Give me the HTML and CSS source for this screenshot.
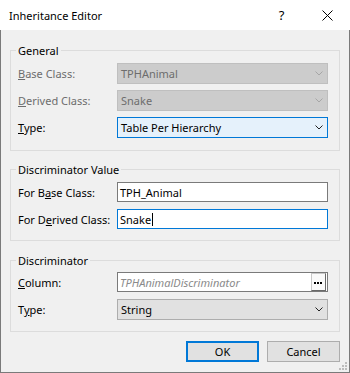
FILE: index.html
```html
<!DOCTYPE html>
<html lang="en">

<head>
  <meta charset="UTF-8" />
  <meta name="viewport" content="width=device-width, initial-scale=1.0" />
  <title>Inheritance Editor</title>
  <link rel="stylesheet" href="styles.css">
</head>

<body>
  <div class="dialog">
    <div class="titlebar">
      <span class="title">Inheritance Editor</span>
      <span class="tb-btn help">?</span>
      <span class="tb-btn close">
        <svg width="11" height="11" viewBox="0 0 11 11"><path d="M0.5 0.5 L10.5 10.5 M10.5 0.5 L0.5 10.5" stroke="#000" stroke-width="1" fill="none" /></svg>
      </span>
    </div>

    <div class="body">
      <fieldset class="group group-general">
        <legend>General</legend>
        <div class="rows">
          <label class="lbl off"><u>B</u>ase Class:</label>
          <div class="combo off">
            <span class="val">TPHAnimal</span>
            <svg class="chev" width="8" height="5" viewBox="0 0 8 5"><polyline points="0.5,0.5 4,4 7.5,0.5" /></svg>
          </div>
          <label class="lbl off"><u>D</u>erived Class:</label>
          <div class="combo off">
            <span class="val">Snake</span>
            <svg class="chev" width="8" height="5" viewBox="0 0 8 5"><polyline points="0.5,0.5 4,4 7.5,0.5" /></svg>
          </div>
          <label class="lbl"><u>T</u>ype:</label>
          <div class="combo focus">
            <span class="val">Table Per Hierarchy</span>
            <svg class="chev" width="8" height="5" viewBox="0 0 8 5"><polyline points="0.5,0.5 4,4 7.5,0.5" /></svg>
          </div>
        </div>
      </fieldset>

      <fieldset class="group group-value">
        <legend>Discriminator Value</legend>
        <div class="rows">
          <label class="lbl">For B<u>a</u>se Class:</label>
          <div class="text">TPH_Animal</div>
          <label class="lbl">For D<u>e</u>rived Class:</label>
          <div class="text focus">Snake<span class="caret"></span></div>
        </div>
      </fieldset>

      <fieldset class="group group-disc">
        <legend>Discriminator</legend>
        <div class="rows">
          <label class="lbl"><u>C</u>olumn:</label>
          <div class="text picker">
            <span class="hint">TPHAnimalDiscriminator</span>
            <span class="dots">
              <svg width="13" height="16" viewBox="0 0 13 16"><rect x="2" y="8" width="2" height="2" /><rect x="5" y="8" width="2" height="2" /><rect x="8" y="8" width="2" height="2" /></svg>
            </span>
          </div>
          <label class="lbl">T<u>y</u>pe:</label>
          <div class="combo plain">
            <span class="val">String</span>
            <svg class="chev" width="8" height="5" viewBox="0 0 8 5"><polyline points="0.5,0.5 4,4 7.5,0.5" /></svg>
          </div>
        </div>
      </fieldset>

      <div class="actions">
        <button class="btn default">OK</button>
        <button class="btn">Cancel</button>
      </div>
    </div>

    <svg class="grip" width="9" height="9" viewBox="0 0 9 9">
      <rect x="6" y="0" width="2" height="2" />
      <rect x="3" y="3" width="2" height="2" />
      <rect x="6" y="3" width="2" height="2" />
      <rect x="0" y="6" width="2" height="2" />
      <rect x="3" y="6" width="2" height="2" />
      <rect x="6" y="6" width="2" height="2" />
    </svg>
  </div>
</body>

</html>
```

FILE: styles.css
```css
* {
  margin: 0;
  padding: 0;
  box-sizing: border-box;
}

body {
  font-family: "Noto Sans", "Open Sans", sans-serif;
  font-size: 11px;
  color: #000;
  background: #f0f0f0;
}

.dialog {
  width: 350px;
  height: 373px;
  position: relative;
  display: flex;
  flex-direction: column;
}

/* title bar */
.titlebar {
  height: 30px;
  background: #fff;
  display: flex;
  align-items: center;
  padding-left: 9px;
}

.title {
  flex: 1;
  font-size: 11px;
}

.tb-btn {
  height: 30px;
  display: flex;
  align-items: center;
  justify-content: center;
}

.help {
  width: 45px;
  font-size: 13px;
}

.close {
  width: 46px;
}

/* client area */
.body {
  flex: 1;
  border: 1px solid #7a7a7a;
  border-top: none;
  padding: 13px 9px 0 9px;
  display: flex;
  flex-direction: column;
}

.group {
  border: 1px solid #dcdcdc;
  padding: 5px 11px 11px 7px;
  min-width: 0;
}

.group legend {
  line-height: 15px;
  padding: 0 2px;
  margin-left: -2px;
}

.group-general {
  padding-bottom: 12px;
}

.group-value {
  margin-top: 11px;
}

.group-disc {
  margin-top: 12px;
  padding-top: 4px;
}

.rows {
  display: grid;
  grid-template-columns: 99px 1fr;
  align-items: center;
  row-gap: 7px;
}

.group-general .rows {
  row-gap: 6px;
}

.lbl {
  white-space: nowrap;
}

.lbl u {
  text-underline-offset: 1px;
}

.lbl.off {
  color: #6d6d6d;
}

/* combo boxes */
.combo {
  height: 21px;
  border: 1px solid #adadad;
  background: #e1e1e1;
  display: flex;
  align-items: center;
  padding: 0 4px 0 3px;
}

.combo .val {
  flex: 1;
  white-space: nowrap;
}

.chev {
  fill: none;
  stroke: #222;
  stroke-width: 1;
}

.combo.off {
  background: #cccccc;
  border-color: #bfbfbf;
  color: #6d6d6d;
}

.combo.off .chev {
  stroke: #a6a6a6;
}

.combo.focus {
  background: #e5f1fb;
  border-color: #0078d7;
}

/* text boxes */
.text {
  height: 20px;
  border: 1px solid #7a7a7a;
  background: #fff;
  display: flex;
  align-items: center;
  padding-left: 2px;
  white-space: nowrap;
}

.text.focus {
  border-color: #0078d7;
}

.caret {
  display: inline-block;
  width: 1px;
  height: 13px;
  background: #000;
  margin-left: 1px;
}

.picker {
  padding-right: 1px;
}

.hint {
  flex: 1;
  font-style: italic;
  color: #8a8a8a;
}

.dots {
  width: 15px;
  height: 18px;
  background: #fafafa;
  border: 1px solid;
  border-color: #c8c8c8 #696969 #696969 #c8c8c8;
  display: flex;
  align-items: flex-start;
  justify-content: center;
}

.dots svg {
  fill: #000;
}

/* buttons */
.actions {
  margin-top: 9px;
  display: flex;
  justify-content: flex-end;
  gap: 8px;
}

.btn {
  width: 73px;
  height: 21px;
  border: 1px solid #adadad;
  background: #e1e1e1;
  font-family: inherit;
  font-size: 11px;
  color: #000;
}

.btn.default {
  border: 2px solid #0078d7;
}

.grip {
  position: absolute;
  right: 2px;
  bottom: 2px;
  fill: #bcbcbc;
}
```
